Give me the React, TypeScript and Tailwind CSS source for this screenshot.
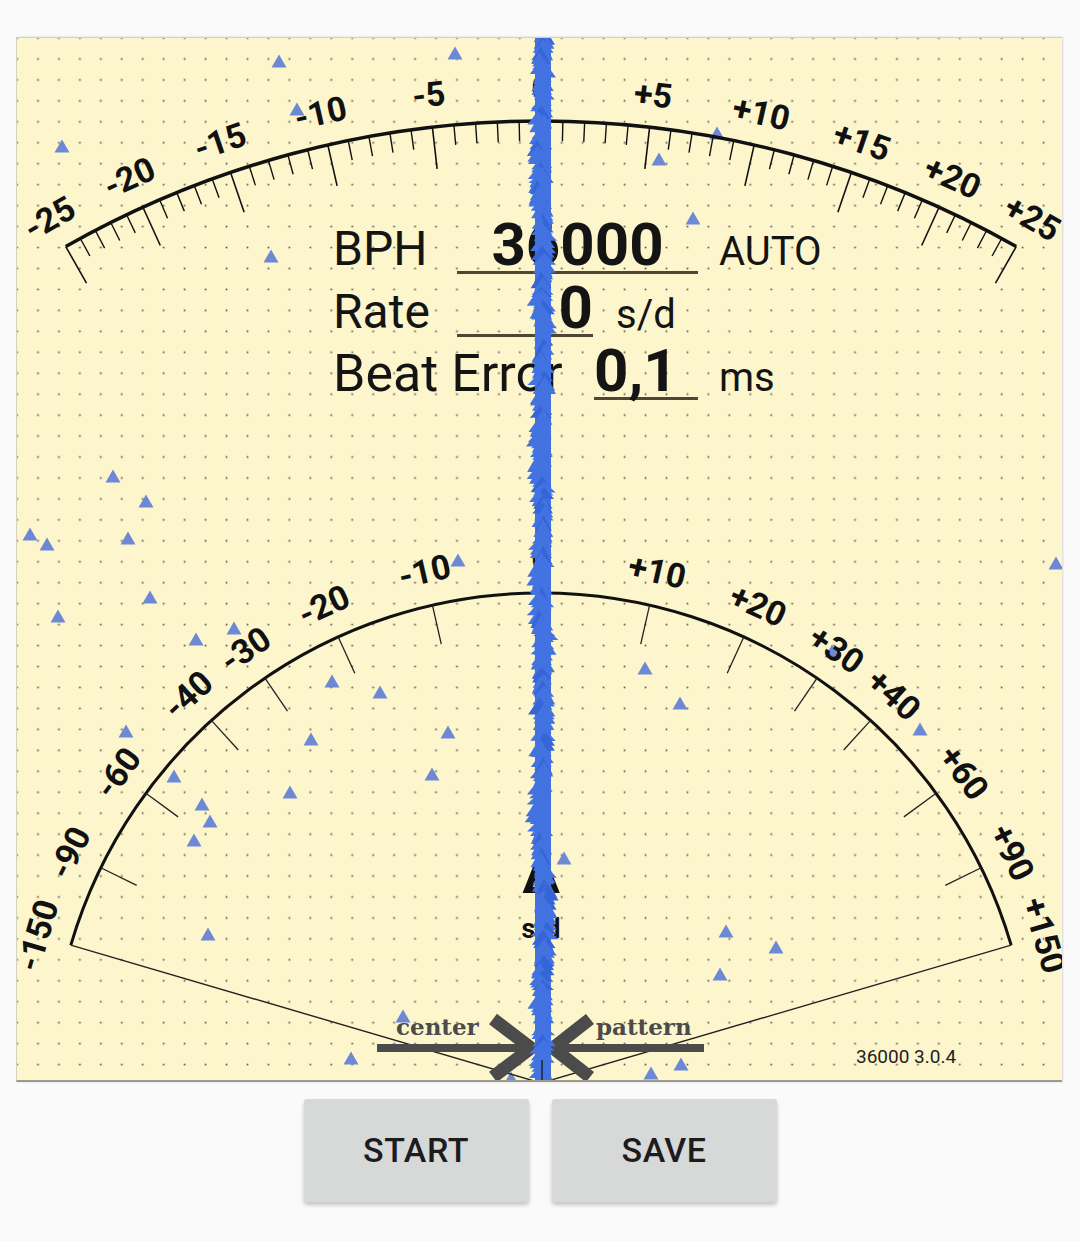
import React from "react";

const CX = 524;
const CY = 1045;
const th = (v: number) => Math.atan(v / 44);
const pt = (v: number, r: number): [number, number] => [
  CX + r * Math.sin(th(v)),
  CY - r * Math.cos(th(v)),
];
const deg = (v: number) => (th(v) * 180) / Math.PI;
const lab = (v: number) => (v > 0 ? `+${v}` : `${v}`);

function mulberry32(a: number) {
  return function () {
    let t = (a += 0x6d2b79f5);
    t = Math.imul(t ^ (t >>> 15), t | 1);
    t ^= t + Math.imul(t ^ (t >>> 7), t | 61);
    return ((t ^ (t >>> 14)) >>> 0) / 4294967296;
  };
}

const scattered: [number, number][] = [
  [278, 60], [454, 52], [61, 145], [296, 108], [716, 132], [658, 158], [692, 217], [270, 255],
  [112, 475], [145, 500],
  [29, 533], [46, 543], [127, 537], [149, 596], [57, 615], [233, 627], [195, 638], [331, 680],
  [379, 691], [125, 730], [310, 738], [447, 731], [173, 775], [431, 773], [289, 791], [201, 803],
  [209, 820], [193, 839], [207, 933], [457, 559],
  [1055, 562], [644, 667], [679, 702], [919, 728], [831, 650], [563, 857], [725, 930], [775, 946],
  [719, 973], [402, 1015], [350, 1057], [510, 1077], [650, 1072], [680, 1063],
];

function tri(x: number, y: number, w: number, h: number) {
  return `${x},${y - h / 2} ${x - w / 2},${y + h / 2} ${x + w / 2},${y + h / 2}`;
}

function Gauge() {
  const RT = 962;
  const RB = 490;
  const topTicks: React.ReactNode[] = [];
  for (let v = -25; v <= 25; v++) {
    const major = v % 5 === 0;
    const [x1, y1] = pt(v, RT);
    const [x2, y2] = pt(v, RT - (major ? 42 : 20));
    topTicks.push(
      <line key={v} x1={x1} y1={y1} x2={x2} y2={y2} stroke="#111" strokeWidth={major ? 1.6 : 1.4} />
    );
  }
  const topLabels = [-25, -20, -15, -10, -5, 0, 5, 10, 15, 20, 25];
  const botTicks = [-90, -60, -40, -30, -20, -10, 0, 10, 20, 30, 40, 60, 90];
  const botLabels = [-150, -90, -60, -40, -30, -20, -10, 0, 10, 20, 30, 40, 60, 90, 150];
  const [ta1x, ta1y] = pt(-25, RT);
  const [ta2x, ta2y] = pt(25, RT);
  const [ba1x, ba1y] = pt(-150, RB);
  const [ba2x, ba2y] = pt(150, RB);

  return (
    <svg className="absolute inset-0" width={1046} height={1045} viewBox="0 0 1046 1045">
      <defs>
        <pattern id="dots" x={-10.475} y={-10.475} width={20.95} height={20.95} patternUnits="userSpaceOnUse">
          <rect x={9.65} y={9.65} width={1.7} height={1.7} fill="#5a584a" />
        </pattern>
      </defs>
      <rect x={0} y={0} width={1046} height={1045} fill="url(#dots)" />

      {scattered.map(([gx, gy], i) => (
        <polygon key={i} points={tri(gx - 16, gy - 37, 15, 13)} fill="#6d89d6" />
      ))}

      <path
        d={`M ${ta1x} ${ta1y} A ${RT} ${RT} 0 0 1 ${ta2x} ${ta2y}`}
        fill="none"
        stroke="#111"
        strokeWidth={3.5}
      />
      {topTicks}
      {topLabels.map((v) => {
        const [x, y] = pt(v, 995);
        return (
          <text
            key={v}
            x={x}
            y={y}
            dy="0.355em"
            textAnchor="middle"
            fontFamily="Roboto, sans-serif"
            fontWeight={700}
            fontSize={34}
            fill="#111"
            transform={`rotate(${deg(v)} ${x} ${y})`}
          >
            {lab(v)}
          </text>
        );
      })}

      <path
        d={`M ${ba1x} ${ba1y} A ${RB} ${RB} 0 0 1 ${ba2x} ${ba2y}`}
        fill="none"
        stroke="#111"
        strokeWidth={3}
      />
      <line x1={ba1x} y1={ba1y} x2={CX} y2={CY} stroke="#222" strokeWidth={1.4} />
      <line x1={ba2x} y1={ba2y} x2={CX} y2={CY} stroke="#222" strokeWidth={1.4} />
      {botTicks.map((v) => {
        const [x1, y1] = pt(v, RB);
        const [x2, y2] = pt(v, RB - 40);
        return <line key={v} x1={x1} y1={y1} x2={x2} y2={y2} stroke="#222" strokeWidth={1.3} />;
      })}
      {botLabels.map((v) => {
        const [x, y] = pt(v, 525);
        return (
          <text
            key={v}
            x={x}
            y={y}
            dy="0.355em"
            textAnchor="middle"
            fontFamily="Roboto, sans-serif"
            fontWeight={700}
            fontSize={34}
            fill="#111"
            transform={`rotate(${deg(v)} ${x} ${y})`}
          >
            {lab(v)}
          </text>
        );
      })}

      <text x={CX} y={855} textAnchor="middle" fontFamily="Roboto, sans-serif" fontWeight={700} fontSize={52} fill="#111">
        Δ
      </text>
      <text x={CX} y={900} textAnchor="middle" fontFamily="Roboto, sans-serif" fontWeight={700} fontSize={27} fill="#111">
        s/d
      </text>

      <line x1={360} y1={1010} x2={508} y2={1010} stroke="#4b4b4b" strokeWidth={8} />
      <polyline points="476,981 514,1010 476,1039" fill="none" stroke="#4b4b4b" strokeWidth={13} strokeLinejoin="miter" />
      <line x1={687} y1={1010} x2={542} y2={1010} stroke="#4b4b4b" strokeWidth={8} />
      <polyline points="573,981 536,1010 573,1039" fill="none" stroke="#4b4b4b" strokeWidth={13} strokeLinejoin="miter" />
      <text x={379} y={997} fontFamily="'DejaVu Serif', serif" fontWeight={700} fontSize={23} fill="#4b4b4b">
        center
      </text>
      <text x={579} y={997} fontFamily="'DejaVu Serif', serif" fontWeight={700} fontSize={23} fill="#4b4b4b">
        pattern
      </text>

      <text x={839} y={1025} fontFamily="Roboto, sans-serif" fontSize={19} fill="#222">
        36000 3.0.4
      </text>
    </svg>
  );
}

function BlueLine() {
  const rnd = mulberry32(98765);
  const polys: React.ReactNode[] = [];
  let drift = 0;
  for (let y = -4; y <= 1050; y += 3) {
    drift += (rnd() - 0.5) * 1.8;
    drift = Math.max(-3.5, Math.min(3.5, drift));
    const x = 526 + drift + (rnd() - 0.5) * 6;
    const w = 14 + rnd() * 10;
    const h = 10 + rnd() * 8;
    polys.push(<polygon key={y} points={tri(x, y, w, h)} fill={rnd() > 0.85 ? "#3565d6" : "#4273e0"} />);
  }
  return (
    <svg className="absolute inset-0 pointer-events-none" width={1046} height={1045} viewBox="0 0 1046 1045">
      <rect x={518} y={0} width={16} height={1045} fill="#4273e0" />
      {polys}
      <line x1={CX + 1} y1={1022} x2={CX + 1} y2={1045} stroke="#111" strokeWidth={1.2} />
    </svg>
  );
}

export default function App() {
  return (
    <div className="min-h-screen bg-[#fafafa] pt-[37px] font-['Roboto',sans-serif]">
      <div className="relative ml-[16px] w-[1046px] h-[1045px] bg-[#fdf6cd] border-l border-t border-[#d3d1bf] border-b-2 border-b-[#9a9b8c] shadow-[1px_0_2px_rgba(0,0,0,0.15)] overflow-hidden">
        <Gauge />
        <div className="relative pl-[316px] pt-[181px] flex flex-col text-[#141414]">
          <div className="flex items-baseline h-[63px]">
            <span className="w-[124px] text-[48px] leading-[52px]">BPH</span>
            <span className="w-[241px] text-center text-[60px] font-bold leading-[52px] border-b-[3px] border-[#4d4535]">
              36000
            </span>
            <span className="ml-[21px] text-[40px] leading-[52px]">AUTO</span>
          </div>
          <div className="flex items-baseline h-[65px]">
            <span className="w-[124px] text-[48px] leading-[52px]">Rate</span>
            <span className="w-[136px] text-right text-[60px] font-bold leading-[52px] border-b-[3px] border-[#4d4535]">
              0
            </span>
            <span className="ml-[23px] text-[40px] leading-[52px]">s/d</span>
          </div>
          <div className="flex items-baseline h-[63px] -mt-[2px]">
            <span className="w-[261px] text-[52px] leading-[52px] whitespace-nowrap">Beat Error</span>
            <span className="w-[104px] text-left text-[60px] font-bold leading-[52px] border-b-[3px] border-[#4d4535]">
              0,1
            </span>
            <span className="ml-[21px] text-[40px] leading-[52px]">ms</span>
          </div>
        </div>
        <BlueLine />
      </div>
      <div className="flex justify-center gap-[23px] mt-[17px]">
        <button className="w-[225px] h-[103px] rounded-[3px] bg-[#d7d8d8] shadow-[0_3px_4px_rgba(0,0,0,0.22)] text-[34px] font-medium tracking-[0.5px] text-[#1c1c1c]">
          START
        </button>
        <button className="w-[225px] h-[103px] rounded-[3px] bg-[#d7d8d8] shadow-[0_3px_4px_rgba(0,0,0,0.22)] text-[34px] font-medium tracking-[0.5px] text-[#1c1c1c]">
          SAVE
        </button>
      </div>
    </div>
  );
}
